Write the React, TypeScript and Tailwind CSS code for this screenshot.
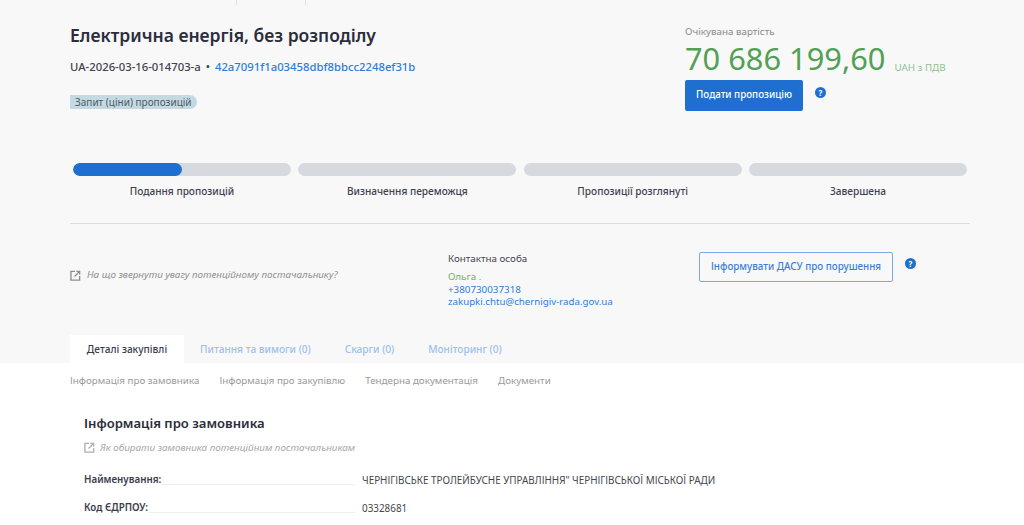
import React from "react";

const Ext = () => (
  <svg width="11" height="11" viewBox="0 0 24 24" fill="none" stroke="#8f8f8f" strokeWidth="3" className="shrink-0">
    <path d="M11 3H2v19h19v-9" />
    <path d="M14 3h7v7" />
    <path d="M21 3 10 14" />
  </svg>
);

const Help = () => (
  <span className="flex h-[11px] w-[11px] items-center justify-center rounded-full bg-[#1f6fd1] text-[8px] font-bold leading-none text-white">?</span>
);

const Stage = ({ label, fill }: { label: string; fill?: boolean }) => (
  <div className="flex w-[218px] flex-col items-center">
    <div className="h-[13px] w-full overflow-hidden rounded-full bg-[#d6d9de]">
      {fill && <div className="h-full w-[109px] rounded-full bg-[#1f6fd1]" />}
    </div>
    <div className="mt-[7px] text-[10.1px] font-medium leading-[16px] text-[#3f4150]">{label}</div>
  </div>
);

const Row = ({ label, value }: { label: string; value: string }) => (
  <div className="flex h-[28px] items-center">
    <div className="flex w-[278px] shrink-0 items-center pr-[7px]">
      <span className="text-[9.8px] font-semibold leading-[16px] text-[#3a3c4a]">{label}</span>
      <span className="mt-[9px] ml-px h-px flex-1 bg-[#eeeeee]" />
    </div>
    <span className="text-[9.88px] leading-[16px] text-[#44464f]">{value}</span>
  </div>
);

export default function App() {
  return (
    <div className="h-[525px] w-[1024px] overflow-hidden bg-white font-['Noto_Sans',sans-serif]">
      <div className="h-[363px] bg-[#f8f8f8]">
        <div className="flex h-[5px] pl-[236px]">
          <div className="h-full w-[70px] border-x border-[#dbe5ef]" />
        </div>
        <div className="ml-[70px] w-[900px]">
          <div className="flex h-[138px] justify-between">
            <div className="pt-[16px]">
              <h1 className="text-[17.5px] font-semibold leading-[28px] text-[#2b2d3c]">Електрична енергія, без розподілу</h1>
              <div className="mt-[10px] flex items-center text-[11.3px] font-medium leading-[16px] text-[#3f4150]">
                <span>UA-2026-03-16-014703-a</span>
                <span className="mx-[5px]">•</span>
                <span className="text-[#2f7cdc]">42a7091f1a03458dbf8bbcc2248ef31b</span>
              </div>
              <div className="mt-[20px] inline-block rounded-r-full bg-[#c3dae2] px-[5px] text-[10px] leading-[14px] text-[#4e5a66]">Запит (ціни) пропозицій</div>
            </div>
            <div className="w-[285px] pt-[19px]">
              <div className="text-[9.8px] leading-[16px] text-[#8a8a8a]">Очікувана вартість</div>
              <div className="mt-[4px] flex h-[33px] items-end">
                <span className="text-[30.8px] leading-[38px] text-[#52a055]">70 686 199,60</span>
                <span className="mb-[1px] ml-[9px] text-[9.8px] leading-[16px] text-[#8fc090]">UAH з ПДВ</span>
              </div>
              <div className="mt-[3px] flex items-start">
                <button className="h-[31px] w-[118px] rounded-[2px] bg-[#1f6fd1] text-[9.8px] font-medium text-white">Подати пропозицію</button>
                <span className="ml-[12px] mt-[7px]"><Help /></span>
              </div>
            </div>
          </div>

          <div className="flex justify-between px-[3px] pt-[20px]">
            <Stage label="Подання пропозицій" fill />
            <Stage label="Визначення переможця" />
            <Stage label="Пропозиції розглянуті" />
            <Stage label="Завершена" />
          </div>

          <div className="mt-[24px] h-px bg-[#dddddd]" />

          <div className="flex h-[111px]">
            <div className="w-[378px] pt-[44px]">
              <div className="flex items-center gap-[6px]">
                <Ext />
                <span className="text-[9.8px] italic leading-[14px] text-[#8f8f8f]">На що звернути увагу потенційному постачальнику?</span>
              </div>
            </div>
            <div className="w-[251px] pt-[27px]">
              <div className="text-[9.8px] leading-[16px] text-[#44464f]">Контактна особа</div>
              <div className="mt-[4px] text-[9.8px] leading-[12px] text-[#6fb06f]">Ольга .</div>
              <div className="mt-px text-[9.8px] leading-[12px] text-[#2f7cdc]">+380730037318</div>
              <div className="text-[9.7px] leading-[11px] text-[#2f7cdc]">zakupki.chtu@chernigiv-rada.gov.ua</div>
            </div>
            <div className="flex items-start pt-[28px]">
              <button className="h-[30px] w-[194px] rounded-[2px] border border-[#7aa9e3] text-[9.8px] font-medium text-[#3a7fd5]">Інформувати ДАСУ про порушення</button>
              <span className="ml-[12px] mt-[6px]"><Help /></span>
            </div>
          </div>

          <div className="flex h-[28px] items-center text-[10.1px] font-medium leading-[16px]">
            <div className="flex h-full w-[114px] items-center justify-center bg-white text-[#3a3c4a]">Деталі закупівлі</div>
            <span className="ml-[16px] text-[#9cc1ee]">Питання та вимоги (0)</span>
            <span className="ml-[34px] text-[#9cc1ee]">Скарги (0)</span>
            <span className="ml-[34px] text-[#9cc1ee]">Моніторинг (0)</span>
          </div>
        </div>
      </div>

      <div className="ml-[70px] w-[900px]">
        <div className="flex gap-[20px] pt-[10px] text-[9.8px] leading-[16px] text-[#999999]">
          <span>Інформація про замовника</span>
          <span>Інформація про закупівлю</span>
          <span>Тендерна документація</span>
          <span>Документи</span>
        </div>
        <div className="pl-[14px] pt-[24px]">
          <h2 className="text-[13.1px] font-semibold leading-[20px] text-[#2b2d3c]">Інформація про замовника</h2>
          <div className="mt-[6px] flex items-center gap-[5px]">
            <span className="opacity-70"><Ext /></span>
            <span className="text-[9.85px] italic leading-[16px] text-[#a8a8a8]">Як обирати замовника потенційним постачальникам</span>
          </div>
          <div className="mt-[11px]">
            <Row label="Найменування:" value={'ЧЕРНІГІВСЬКЕ ТРОЛЕЙБУСНЕ УПРАВЛІННЯ" ЧЕРНІГІВСЬКОЇ МІСЬКОЇ РАДИ'} />
            <Row label="Код ЄДРПОУ:" value="03328681" />
          </div>
        </div>
      </div>
    </div>
  );
}
